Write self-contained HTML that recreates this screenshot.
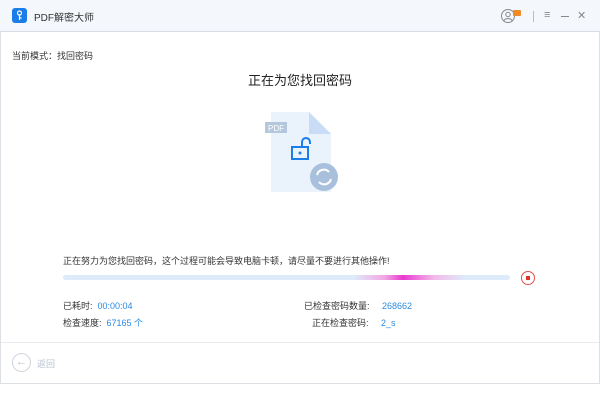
<!DOCTYPE html>
<html><head><meta charset="utf-8"><style>
*{margin:0;padding:0;box-sizing:border-box}
body{width:600px;height:400px;background:#fff;font-family:"Liberation Sans","Noto Sans CJK SC",sans-serif;position:relative;overflow:hidden;color:#333}
.win{position:absolute;left:0;top:0;width:600px;height:384px;border:1px solid #dcdfe4;border-top:none}
.tb{position:absolute;left:0;top:0;width:600px;height:32px;background:#f4f7fb;border-bottom:1px solid #d9dde3}
.t{position:absolute;font-size:9px;white-space:nowrap}
.b{color:#2a8ae6}
</style></head><body>
<div class="win"></div>
<div class="tb"></div>
<div style="position:absolute;left:12px;top:8px;width:15px;height:15px;background:#1a7de8;border-radius:3px"></div>
<svg style="position:absolute;left:12px;top:8px" width="15" height="15"><circle cx="7.5" cy="5" r="2" fill="none" stroke="#fff" stroke-width="1.2"/><path d="M7.5 7v5M7.5 10h2" stroke="#fff" stroke-width="1.2"/></svg>
<div class="t" style="left:34px;top:9px;font-size:10px;color:#333">PDF解密大师</div>
<svg style="position:absolute;left:500px;top:7px" width="24" height="18"><circle cx="8" cy="9" r="6.5" fill="none" stroke="#888" stroke-width="1"/><circle cx="8" cy="7.5" r="2.2" fill="none" stroke="#888"/><path d="M4 13.5c1-2.5 7-2.5 8 0" fill="none" stroke="#888"/><rect x="13" y="3" width="8" height="6" rx="1" fill="#f08a24"/></svg>
<div style="position:absolute;left:533px;top:11px;width:1px;height:11px;background:#bbb"></div>
<div class="t" style="left:544px;top:9px;font-size:11px;color:#888">≡</div>
<div style="position:absolute;left:561px;top:16px;width:8px;height:1px;background:#888"></div>
<div class="t" style="left:577px;top:9px;font-size:11px;color:#888">✕</div>
<div class="t" style="left:12px;top:49px">当前模式：找回密码</div>
<div class="t" style="left:0;width:600px;text-align:center;top:70px;font-size:13px;color:#222">正在为您找回密码</div>
<svg style="position:absolute;left:265px;top:110px" width="76" height="82">
<path d="M6 2h38l22 22v60H6z" fill="#eaf2fc"/><path d="M44 2v22h22z" fill="#c8dcf5"/>
<rect x="0" y="12" width="22" height="11" fill="#b5c7dc"/><text x="3" y="21" font-size="8" fill="#fff" font-family="Liberation Sans">PDF</text>
<path d="M37 37v-5a4 4 0 0 1 8 0v2" fill="none" stroke="#1a7de8" stroke-width="2"/>
<rect x="27" y="37" width="16" height="12" fill="none" stroke="#1a7de8" stroke-width="2"/><circle cx="35" cy="43" r="1.5" fill="#1a7de8"/>
<circle cx="59" cy="67" r="14" fill="#a9c0dc"/><path d="M52 65a7 7 0 0 1 12-3M66 69a7 7 0 0 1-12 3" fill="none" stroke="#fff" stroke-width="2"/>
</svg>
<div class="t" style="left:63px;top:254px">正在努力为您找回密码，这个过程可能会导致电脑卡顿，请尽量不要进行其他操作!</div>
<div style="position:absolute;left:63px;top:275px;width:447px;height:5px;border-radius:3px;background:linear-gradient(90deg,#deebfa 0,#deebfa 65%,#f3a6e4 72%,#e83ad0 76%,#f3b9ea 83%,#deebfa 90%)"></div>
<div style="position:absolute;left:521px;top:271px;width:14px;height:14px;border:1px solid #e05050;border-radius:50%"></div>
<div style="position:absolute;left:526px;top:276px;width:4px;height:4px;background:#e03030"></div>
<div class="t" style="left:63px;top:299px">已耗时: <span class="b">&nbsp;00:00:04</span></div>
<div class="t" style="left:63px;top:316px">检查速度: <span class="b">&nbsp;67165 个</span></div>
<div class="t" style="left:304px;top:299px">已检查密码数量: <span class="b" style="margin-left:10px">268662</span></div>
<div class="t" style="left:312px;top:316px">正在检查密码: <span class="b" style="margin-left:10px">2_s</span></div>
<div style="position:absolute;left:1px;top:342px;width:598px;height:1px;background:#e8eaee"></div>
<div style="position:absolute;left:12px;top:353px;width:19px;height:19px;border:1px solid #d0d4da;border-radius:50%;color:#bbb;font-size:11px;text-align:center;line-height:17px">←</div>
<div class="t" style="left:37px;top:357px;color:#b8c0d0">返回</div>
</body></html>
